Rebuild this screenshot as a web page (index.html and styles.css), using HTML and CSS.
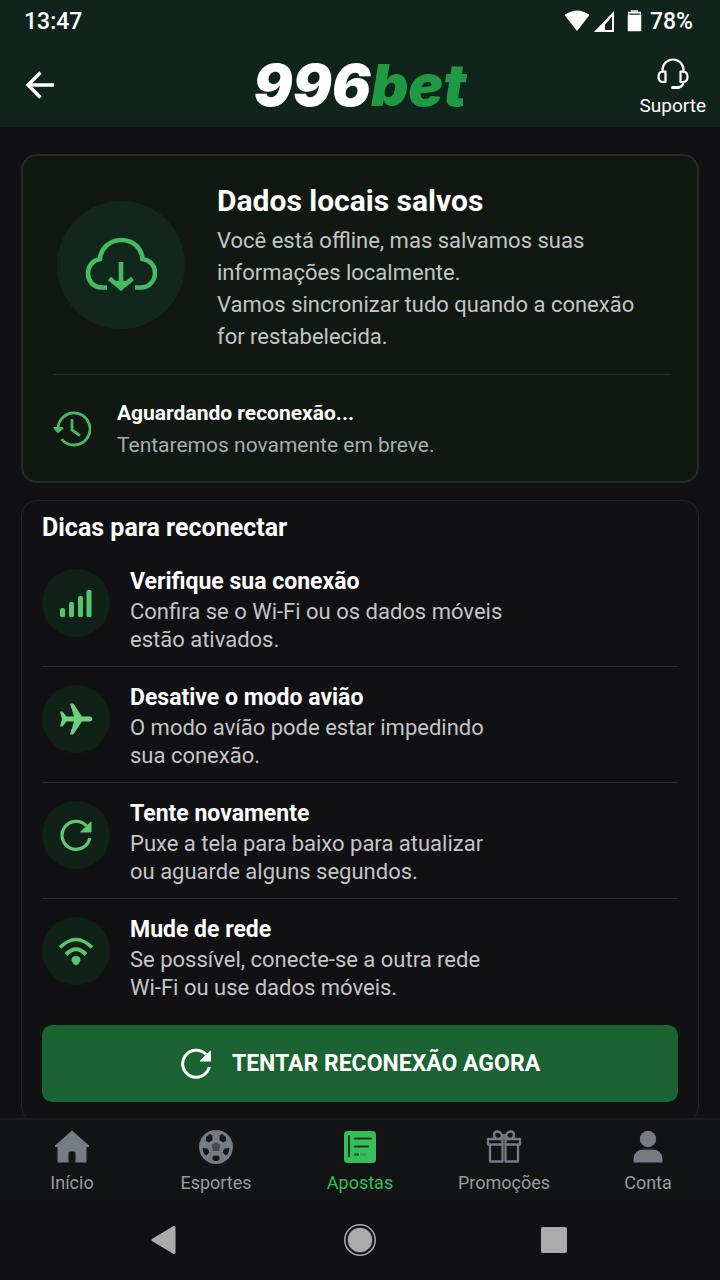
FILE: index.html
```html
<!DOCTYPE html>
<html lang="pt-BR">
<head>
    <meta charset="UTF-8">
    <meta name="viewport" content="width=device-width, initial-scale=1.0">
    <title>996bet - Offline</title>
    <link rel="stylesheet" href="styles.css">
</head>
<body>
    <header class="top">
        <div class="status-bar">
            <span>13:47</span>
            <div class="status-icons">
                <svg width="26" height="22" viewBox="0 0 26 22"><path d="M0.500 5Q13-4 25.500 5L13 21z" fill="#fff"/></svg>
                <svg width="20" height="21" viewBox="0 0 20 21"><path d="M20 0v21H0zM18 5.500L11 13.500v5.500h7z" fill="#fff" fill-rule="evenodd"/></svg>
                <svg class="battery" width="15" height="22" viewBox="0 0 15 22"><path d="M4 0h7v2h3v4H1V2h3z" fill="#b9beba"/><path d="M1 2.500h13M1.500 5.500v15h12v-15z" stroke="#fff" stroke-width="1.500" fill="#fff"/><path d="M2.500 3.500h10v1.500h-10z" fill="#4a5a51"/></svg>
                <span>78%</span>
            </div>
        </div>
        <div class="app-bar">
            <button class="back-btn" aria-label="Voltar">
                <svg width="30" height="28" viewBox="0 0 30 28" fill="none" stroke="#fff" stroke-width="3.400"><path d="M15.500 1.500L3 14l12.500 12.500M3 14h26"/></svg>
            </button>
            <div class="logo">996<span>bet</span></div>
            <button class="support-btn">
                <svg width="32" height="32" viewBox="0 0 32 32" fill="none" stroke="#fff" stroke-width="2.200" stroke-linecap="round" stroke-linejoin="round"><path d="M5.500 14v-2a10.500 10.500 0 0 1 21 0v2"/><path d="M8.500 13.500v10.500H6.500Q1.500 24 1.500 18.700T6.500 13.500zM23.500 13.500v10.500h2Q30.500 24 30.500 18.700T25.500 13.500z"/><path d="M26.500 24q-1 5.500-6 5.500"/><path d="M15.500 29.500h6" stroke-width="3"/></svg>
                Suporte
            </button>
        </div>
    </header>

    <main class="content">
        <section class="card saved-card">
            <div class="saved">
                <div class="cloud">
                    <svg width="72" height="56" viewBox="0 0 72 56" fill="none" stroke="#45ba61" stroke-width="4.600"><path d="M22 50.500h-5C8 50.500 3 43.500 3 36.500c0-8 5.500-13.500 12-14.500C15.500 11.500 25 3 36.500 3S57 11.500 57.500 22C65 23 70 28.500 70 36c0 8-6 14.500-14.500 14.500H50"/><path d="M36 25v22M24.500 41.500L36 51l11.500-9.500"/><path d="M28 44h16l-8 10z" fill="#45ba61" stroke="none"/></svg>
                </div>
                <div class="saved-text">
                    <h1>Dados locais salvos</h1>
                    <p>Você está offline, mas salvamos suas<br>informações localmente.</p>
                    <p>Vamos sincronizar tudo quando a conexão<br>for restabelecida.</p>
                </div>
            </div>
            <div class="waiting">
                <svg width="38" height="38" viewBox="0 0 38 38" fill="none" stroke="#45ba61" stroke-width="2.800"><path d="M5 19.500A16 16 0 1 1 8.500 29"/><path d="M19 9v11l8 5.500"/><path d="M1.500 18h8L5 22z" fill="#45ba61" stroke-width="2" stroke-linejoin="round"/></svg>
                <div>
                    <h2>Aguardando reconexão...</h2>
                    <p>Tentaremos novamente em breve.</p>
                </div>
            </div>
        </section>

        <section class="card tips-card">
            <h2>Dicas para reconectar</h2>
            <ul class="tips">
                <li>
                    <div class="tip-icon">
                        <svg width="34" height="30" viewBox="0 0 34 30" fill="#54c56c"><rect x="1" y="20" width="5" height="9" rx="1.500"/><rect x="10" y="14" width="5" height="15" rx="1.500"/><rect x="19" y="8" width="5" height="21" rx="1.500"/><rect x="27.500" y="2" width="5" height="27" rx="1.500"/></svg>
                    </div>
                    <div>
                        <h3>Verifique sua conexão</h3>
                        <p>Confira se o Wi-Fi ou os dados móveis<br>estão ativados.</p>
                    </div>
                </li>
                <li>
                    <div class="tip-icon">
                        <svg width="34" height="34" viewBox="0 0 34 34" fill="#6bd07f"><path d="M11 1.500h2.500q.8 0 1.300.8L23 14.500h8q2.500.5 2.500 2.500t-2.500 2.500h-8l-8.200 12.200q-.5.800-1.300.8H11l4-13H7.500l-4 5H1L3 17 1 9.500h2.500l4 5H15z"/></svg>
                    </div>
                    <div>
                        <h3>Desative o modo avião</h3>
                        <p>O modo avíão pode estar impedindo<br>sua conexão.</p>
                    </div>
                </li>
                <li>
                    <div class="tip-icon">
                        <svg width="32" height="32" viewBox="0 0 32 32" fill="none" stroke="#5dc873" stroke-width="3.200"><path d="M29.800 19A14 14 0 1 1 26.500 7"/><path d="M31 3v10H20.500z" fill="#5dc873" stroke-width="1"/></svg>
                    </div>
                    <div>
                        <h3>Tente novamente</h3>
                        <p>Puxe a tela para baixo para atualizar<br>ou aguarde alguns segundos.</p>
                    </div>
                </li>
                <li>
                    <div class="tip-icon">
                        <svg width="36" height="30" viewBox="0 0 36 30" fill="none" stroke="#58c66d" stroke-width="4"><path d="M2 11.500Q18-4.500 34 11.500" stroke-width="3.400"/><path d="M8 18.500q10-10.500 20 0"/><path d="M18 20q4.500 0 4.500 4Q21.500 28 18 29.500q-3.500-1.500-4.500-5.500Q13.500 20 18 20z" fill="#58c66d" stroke="none"/></svg>
                    </div>
                    <div>
                        <h3>Mude de rede</h3>
                        <p>Se possível, conecte-se a outra rede<br>Wi-Fi ou use dados móveis.</p>
                    </div>
                </li>
            </ul>
            <button class="retry-btn">
                <svg width="32" height="32" viewBox="0 0 32 32" fill="none" stroke="#fff" stroke-width="3"><path d="M29.300 19A13.500 13.500 0 1 1 26 6.500"/><path d="M30.500 3v10H20z" fill="#fff" stroke-width="1"/></svg>
                TENTAR RECONEXÃO AGORA
            </button>
        </section>
    </main>

    <nav class="tab-bar">
        <a href="#">
            <svg width="36" height="36" viewBox="0 0 36 36" fill="#767b84"><path d="M18 1.500L35 16.500v1.500h-2.500v15.500h-11V24q0-1.500-1.500-1.500h-4q-1.500 0-1.500 1.500v9.500h-11V18H1v-1.500z"/></svg>
            Início
        </a>
        <a href="#">
            <svg width="36" height="36" viewBox="0 0 36 36"><circle cx="18" cy="18" r="17" fill="#767b84"/><g fill="#15181b"><path d="M8 8l4-3 2.500 1.500v4.500L11 13.500 8 12zM28 8l-4-3-2.500 1.500v4.500l3.500 2.500 3-1.500zM4.500 19l5 .5 2 3.500-3 3.500-2.500-1.500zM31.500 19l-5 .5-2 3.500 3 3.500 2.500-1.500zM16 26.500h4l2 2.500-2 3h-4l-2-3z"/><path d="M18 13l4.500 3-1.500 6h-6l-1.500-6z" fill="#454a51"/></g></svg>
            Esportes
        </a>
        <a href="#" class="active">
            <svg width="36" height="36" viewBox="0 0 36 36"><rect x="2" y="2" width="32" height="32" rx="4" fill="#37bd59"/><g stroke="#123e20" stroke-width="2" stroke-linecap="round"><path d="M7 7v20.500M13 9.500h16M13 17.500h13"/><path d="M13 25.500h3"/><path d="M19 25.500h5" stroke="#2ea14b"/></g></svg>
            Apostas
        </a>
        <a href="#">
            <svg width="36" height="36" viewBox="0 0 36 36" fill="none" stroke="#767b84" stroke-width="2.300" stroke-linejoin="round"><path d="M2 10h14.500v5.500H2zM19.500 10H34v5.500H19.500zM4 15.500h12.500v17H4zM19.500 15.500H32v17H19.500z"/><path d="M17 9.500Q15.500 2.500 11.500 2.500 8 2.500 8 6q0 3 3 4M19 9.500q1.500-7 5.500-7Q28 2.500 28 6q0 3-3 4M12 10q3-1 6-4 3 3 6 4"/></svg>
            Promoções
        </a>
        <a href="#">
            <svg width="36" height="36" viewBox="0 0 36 36" fill="#767b84"><circle cx="18" cy="10" r="8.200"/><path d="M3.500 33.500V30Q4 20.500 14 20.500h8q10 0 10.500 9.500v3.500z"/></svg>
            Conta
        </a>
    </nav>

    <div class="system-bar">
        <button aria-label="Voltar"><svg width="34" height="34" viewBox="0 0 34 34"><path d="M5 17L26 4.500v25z" fill="#ababab" stroke="#ababab" stroke-width="3" stroke-linejoin="round"/></svg></button>
        <button aria-label="Tela inicial"><svg width="34" height="34" viewBox="0 0 34 34"><circle cx="17" cy="17" r="12.300" fill="#ababab"/><circle cx="17" cy="17" r="15.200" fill="none" stroke="#ababab" stroke-width="1.600"/></svg></button>
        <button aria-label="Recentes"><svg width="34" height="34" viewBox="0 0 34 34"><rect x="3" y="4" width="26" height="26" rx="2" fill="#ababab"/></svg></button>
    </div>
</body>
</html>
```
FILE: styles.css
```css
* {
    box-sizing: border-box;
}
body {
    margin: 0;
    height: 100vh;
    display: flex;
    flex-direction: column;
    background-color: #111113;
    color: #fff;
    font-family: Roboto, "Noto Sans", sans-serif;
}
h1, h2, h3, p, ul {
    margin: 0;
    padding: 0;
}
svg {
    display: block;
    flex-shrink: 0;
}
button {
    padding: 0;
    border: none;
    background: none;
    color: inherit;
    font-family: inherit;
    cursor: pointer;
}
.top {
    flex-shrink: 0;
    background-color: #10241b;
}
.status-bar {
    display: flex;
    justify-content: space-between;
    align-items: center;
    height: 42px;
    padding: 0 27px 0 24px;
    font-size: 23px;
    font-weight: 500;
}
.status-icons {
    display: flex;
    align-items: center;
    gap: 4px;
}
.status-icons .battery {
    margin: 0 4px 0 9px;
}
.app-bar {
    display: grid;
    grid-template-columns: 1fr auto 1fr;
    align-items: center;
    height: 85px;
    padding: 0 14px;
}
.back-btn {
    justify-self: start;
    padding-left: 11px;
}
.logo {
    font-family: Inter, sans-serif;
    font-size: 58px;
    font-weight: 900;
    font-style: italic;
    line-height: 72px;
}
.logo span {
    color: #1f9a43;
}
.support-btn {
    justify-self: end;
    display: flex;
    flex-direction: column;
    align-items: center;
    gap: 4px;
    padding-top: 6px;
    font-size: 19px;
    line-height: 24px;
}
.content {
    flex: 1;
    min-height: 0;
    overflow-y: auto;
    scrollbar-width: none;
    padding: 27px 21px 0;
}
.card {
    border: 1px solid #24282b;
    border-radius: 16px;
}
.saved-card {
    margin-bottom: 17px;
    padding: 27px 26px 20px 30px;
    border: 2px solid #26292a;
    background-color: #111811;
}
.saved {
    display: flex;
    align-items: flex-start;
    gap: 32px;
    padding: 0 4px 21px;
    border-bottom: 1px solid #262b30;
}
.cloud {
    display: flex;
    align-items: center;
    justify-content: center;
    width: 128px;
    height: 128px;
    flex-shrink: 0;
    margin-top: 18px;
    border-radius: 50%;
    background-color: #12271c;
}
.saved-text h1 {
    margin-bottom: 6px;
    font-size: 30px;
    line-height: 36px;
}
.saved-text p {
    font-size: 22px;
    line-height: 32px;
    color: #c3c5c8;
}
.waiting {
    display: flex;
    align-items: center;
    gap: 26px;
    padding-top: 22px;
}
.waiting h2,
.waiting p {
    font-size: 21px;
    line-height: 32px;
}
.waiting p {
    color: #a9adb3;
}
.tips-card {
    padding: 13px 20px 20px;
}
.tips-card h2 {
    font-size: 25px;
    line-height: 28px;
}
.tips {
    margin-top: 9px;
    list-style: none;
}
.tips li {
    display: flex;
    gap: 20px;
    padding: 16px 0 12px;
    border-bottom: 1px solid #25292c;
}
.tips li:last-child {
    padding-bottom: 8px;
    border-bottom: none;
}
.tip-icon {
    display: flex;
    align-items: center;
    justify-content: center;
    width: 68px;
    height: 68px;
    flex-shrink: 0;
    margin-top: 2px;
    border-radius: 50%;
    background-color: #102117;
}
.tips h3 {
    margin-bottom: 1px;
    font-size: 23px;
    line-height: 30px;
}
.tips p {
    font-size: 22px;
    line-height: 28px;
    color: #c3c5c8;
}
.retry-btn {
    display: flex;
    align-items: center;
    justify-content: center;
    gap: 20px;
    width: 100%;
    height: 77px;
    margin-top: 15px;
    border-radius: 10px;
    background-color: #1c6333;
    font-size: 23px;
    font-weight: 700;
}
.tab-bar {
    display: grid;
    grid-template-columns: repeat(5, 1fr);
    flex-shrink: 0;
    height: 82px;
    padding-top: 9px;
    border-top: 2px solid #1b1e22;
    background-color: #111315;
}
.tab-bar a {
    display: flex;
    flex-direction: column;
    align-items: center;
    gap: 6px;
    color: #989ca4;
    font-size: 18px;
    line-height: 24px;
    text-decoration: none;
}
.tab-bar .active {
    color: #37bd59;
}
.system-bar {
    display: grid;
    grid-template-columns: repeat(3, 195px);
    justify-content: center;
    flex-shrink: 0;
    height: 80px;
}
.system-bar button {
    display: flex;
    align-items: center;
    justify-content: center;
}
```
